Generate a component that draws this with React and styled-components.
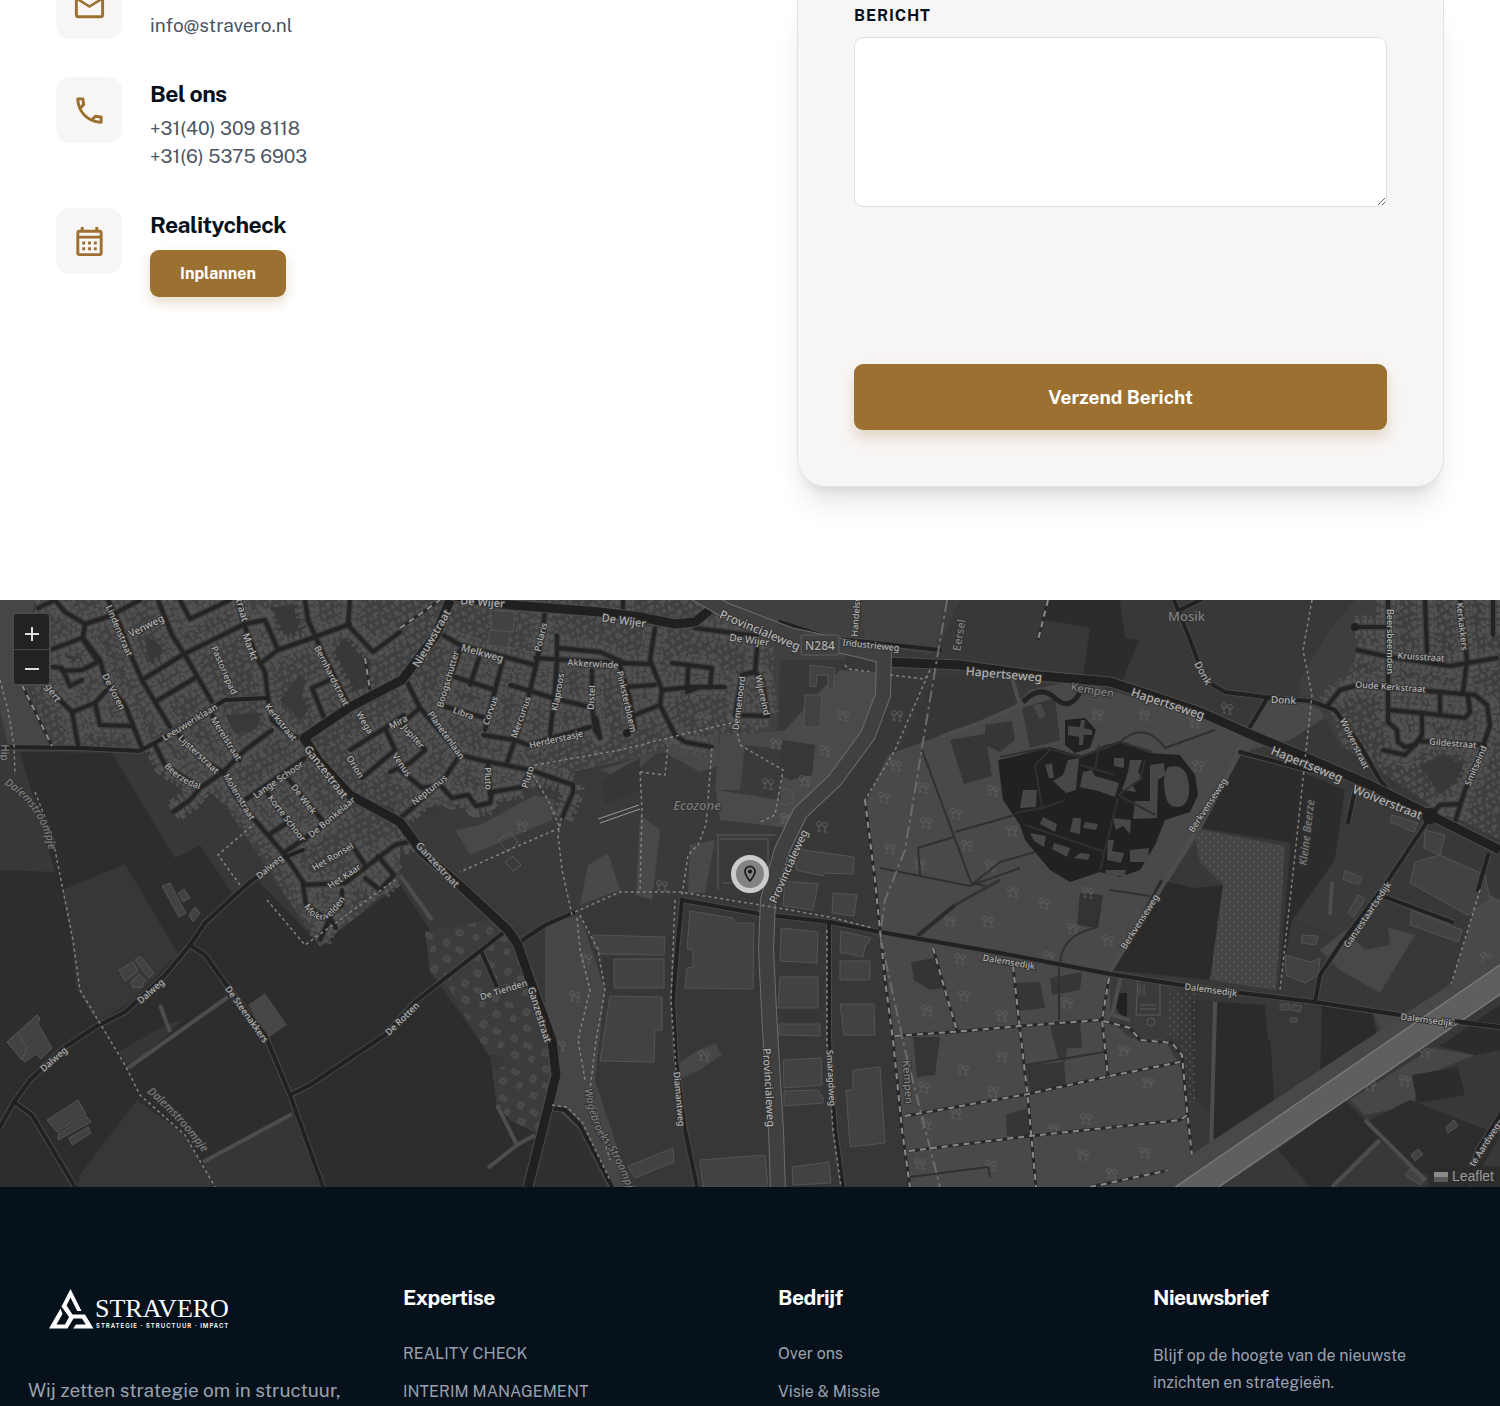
import React from 'react';
import styled, { createGlobalStyle } from 'styled-components';
import {
  MdOutlineCalendarMonth,
  MdOutlineCall,
  MdOutlineLocationOn,
  MdOutlineMail
} from 'react-icons/md';

const GlobalStyle = createGlobalStyle`
  *, *::before, *::after {
    box-sizing: border-box;
  }

  body {
    margin: 0;
    background: #ffffff;
    color: #07111b;
    font-family: 'Public Sans', Inter, 'Liberation Sans', sans-serif;
    font-size: 19px;
  }

  h3, p, ul {
    margin: 0;
    padding: 0;
  }
`;

/* ---------- contact ---------- */

const Contact = styled.section`
  display: grid;
  grid-template-columns: repeat(2, minmax(0, 1fr));
  gap: 94px;
  padding: 0 56px 113px;
`;

const ContactList = styled.div`
  display: flex;
  flex-direction: column;
  gap: 38px;
`;

const ContactItem = styled.div`
  display: flex;
  align-items: flex-start;
  gap: 28px;
`;

const IconTile = styled.div`
  display: flex;
  align-items: ${props => (props.$cut ? 'flex-end' : 'center')};
  justify-content: center;
  width: 66px;
  height: ${props => (props.$cut ? '39px' : '66px')};
  padding-bottom: ${props => (props.$cut ? '15px' : '0')};
  overflow: hidden;
  border-radius: ${props => (props.$cut ? '0 0 14px 14px' : '14px')};
  background: #f8f6f5;
  color: #9c7030;

  svg {
    flex: none;
    width: 35px;
    height: 35px;
  }
`;

const ContactBody = styled.div`
  display: flex;
  flex-direction: column;
  align-items: flex-start;
  align-self: ${props => (props.$bottom ? 'flex-end' : 'auto')};
`;

const ContactTitle = styled.h3`
  margin-bottom: 4px;
  font-size: 23px;
  font-weight: 700;
  line-height: 33px;
  letter-spacing: -0.025em;
`;

const ContactLink = styled.a`
  color: #4a5565;
  line-height: 28px;
  text-decoration: none;
`;

const PlanButton = styled.button`
  height: 47px;
  margin-top: 5px;
  padding: 0 30px;
  border: 0;
  border-radius: 9px;
  background: #9c7030;
  box-shadow: 0 6px 12px rgba(156, 112, 48, 0.24);
  color: #ffffff;
  font: inherit;
  font-size: 16px;
  font-weight: 700;
`;

const FormCard = styled.form`
  display: flex;
  flex-direction: column;
  padding: 4px 56px 56px;
  border: 1px solid #e6e2df;
  border-top: 0;
  border-radius: 0 0 28px 28px;
  background: #f8f6f5;
  box-shadow: 0 22px 28px -6px rgba(0, 0, 0, 0.1),
    0 9px 12px -7px rgba(0, 0, 0, 0.1);
`;

const FieldLabel = styled.label`
  margin-bottom: 9px;
  font-size: 16px;
  font-weight: 700;
  line-height: 24px;
  letter-spacing: 0.05em;
  text-transform: uppercase;
`;

const MessageBox = styled.textarea`
  width: 100%;
  height: 170px;
  padding: 14px 19px;
  border: 1px solid #e2dfdc;
  border-radius: 9px;
  background: #ffffff;
  font: inherit;
  resize: vertical;
`;

const SubmitButton = styled.button`
  height: 66px;
  margin-top: 157px;
  border: 0;
  border-radius: 9px;
  background: #9c7030;
  box-shadow: 0 8px 14px rgba(156, 112, 48, 0.24);
  color: #ffffff;
  font: inherit;
  font-weight: 700;
`;

/* ---------- map ---------- */

const MapFrame = styled.section`
  position: relative;
  height: 587px;
  overflow: hidden;
  background: #383838;
`;

const MapSvg = styled.svg`
  display: block;
  width: 100%;
  height: 100%;

  text {
    fill: #b0b0b0;
    stroke: #333333;
    stroke-width: 2px;
    paint-order: stroke;
    font-family: 'Noto Sans', sans-serif;
    font-weight: 500;
    text-anchor: middle;
  }

  .water {
    fill: #7a7a7a;
    font-style: italic;
  }

  .area {
    fill: #808080;
  }
`;

const ZoomControl = styled.div`
  position: absolute;
  top: 12px;
  left: 12px;
  display: flex;
  flex-direction: column;
  overflow: hidden;
  border: 2px solid #4a4a4a;
  border-radius: 4px;
`;

const ZoomButton = styled.button`
  display: flex;
  align-items: center;
  justify-content: center;
  width: 35px;
  height: 35px;
  padding: 4px 0 0;
  border: 0;
  background: #222222;
  color: #dddddd;

  & + & {
    border-top: 1px solid #484848;
  }
`;

const Marker = styled.div`
  position: absolute;
  top: 255px;
  left: 50%;
  display: flex;
  align-items: center;
  justify-content: center;
  width: 38px;
  height: 38px;
  margin-left: -19px;
  border: 5px solid #cbcbcb;
  border-radius: 50%;
  background: #828282;
  color: #171717;

  svg {
    width: 20px;
    height: 20px;
  }
`;

const Attribution = styled.a`
  position: absolute;
  right: 0;
  bottom: 0;
  display: flex;
  align-items: center;
  gap: 4px;
  padding: 0 6px;
  background: rgba(42, 42, 42, 0.8);
  color: #9a9a9a;
  font-family: 'Liberation Sans', Arial, sans-serif;
  font-size: 14px;
  line-height: 21px;
  text-decoration: none;
`;

const TOWN_WEST =
  '38,0 450,0 404,78 304,138 400,222 400,280 320,347 265,265 225,205 155,148 50,148 20,60';
const TOWN_NORTH =
  '400,0 690,0 720,15 775,48 768,130 700,142 560,175 520,200 400,210 350,195 304,138 404,78';
const TOWN_EAST =
  '1330,110 1345,80 1385,0 1500,0 1500,240 1430,205 1340,145';
const DE_TIENDEN =
  '425,332 500,318 520,345 552,440 560,480 540,535 510,520 497,505 492,470 507,465 500,455 488,455 450,390 430,372';

const AREAS = [
  // farmland
  ['#2d2d2d', '20,152 112,153 175,258 200,245 232,290 240,262 320,345 400,285 430,330 430,372 490,455 497,505 545,530 528,587 0,587 0,270 55,272'],
  ['#383838', '115,155 155,150 165,165 200,185 240,180 285,255 240,290 232,293 200,245 175,258'],
  ['#373737', '62,290 125,264 178,354 130,402 98,423 77,390 70,330'],
  ['#373737', '137,500 185,535 205,570 220,587 78,587 80,575'],
  ['#363636', '203,562 292,512 303,540 318,587 265,587 270,575 288,565 270,587 212,587'],
  ['#474747', '265,393 287,425 268,438 248,405'],
  ['#363636', '118,452 165,425 185,418 130,468'],
  ['#303030', '553,508 570,512 582,530 610,587 528,587 545,525'],
  // town
  ['#404040', TOWN_WEST],
  ['#404040', '400,0 960,0 850,45 845,60 780,60 778,130 720,140 560,175 520,200 400,210 350,195 304,138 404,78'],
  ['#3c3c3c', DE_TIENDEN],
  ['url(#houses)', TOWN_WEST],
  ['url(#houses)', TOWN_NORTH],
  ['url(#farms)', DE_TIENDEN],
  ['#464646', '0,0 36,0 18,60 50,145 8,146 0,110'],
  ['#383838', '270,8 312,2 312,40 280,52'],
  ['#383838', '345,35 372,55 368,85 345,95 330,60'],
  ['#393939', '66,55 98,60 82,72 65,70'],
  ['#383838', '145,35 160,45 165,60 150,68'],
  ['#393939', '225,115 265,112 255,130 235,133'],
  ['#393939', '300,75 320,95 300,120 280,100'],
  // park and woodland west
  ['#3a3a3a', '400,225 540,180 720,145 790,145 760,295 620,295 530,335'],
  ['#484848', '480,225 535,195 555,200 552,220 470,255 455,230'],
  ['#484848', '600,170 718,132 720,165 700,172 660,150 625,180'],
  ['#484848', '720,135 792,130 790,150 745,145 740,190 715,190'],
  ['#494949', '640,215 660,230 652,300 636,295'],
  ['#494949', '690,245 715,240 705,293 688,293'],
  ['#494949', '588,265 608,253 620,290 580,305'],
  ['#4a4a4a', '840,70 878,72 866,140 832,175 790,228 720,220 716,190 780,200 785,130'],
  ['#373737', '782,140 815,145 812,175 790,180 780,175'],
  ['#363636', '600,180 640,158 640,190 605,205'],
  ['#464646', '545,325 580,315 605,390 595,480 630,587 608,587 580,530 552,505 560,450 545,405'],
  // business park
  ['#373737', '640,300 760,314 864,305 884,400 910,587 640,587 595,480 612,390 580,315'],
  ['#464646', '676,465 695,452 715,443 722,455 700,470 678,480'],
  ['#3e3e3e', '855,0 960,0 935,55 860,45'],
  ['#424242', '860,0 945,0 935,45 865,40'],
  // big forest
  ['#494949', '866,203 888,155 950,130 1010,110 1030,90 1075,80 1150,102 1250,130 1268,100 1345,105 1290,140 1250,150 1195,240 1110,372 1165,440 1182,470 1192,565 1175,587 910,587 886,370'],
  ['#363636', '935,75 1010,75 1016,107 940,136 900,150'],
  ['#363636', '950,140 985,134 992,176 964,184'],
  ['#363636', '985,125 1012,121 1015,140 1000,152 985,145'],
  ['#373737', '1022,108 1055,98 1060,140 1030,148'],
  ['#333333', '1080,293 1103,295 1098,328 1077,325'],
  ['#343434', '911,362 935,358 943,388 930,390 914,380'],
  ['#363636', '1016,383 1040,382 1045,408 1018,411'],
  ['#363636', '1050,378 1082,372 1080,390 1052,395'],
  ['#363636', '1050,425 1080,422 1082,448 1067,448 1065,462 1058,458'],
  ['#353535', '913,437 940,437 935,475 917,477'],
  ['#353535', '1026,465 1064,462 1066,487 1030,492'],
  ['#363636', '1006,515 1028,508 1030,536 1007,536'],
  ['#3b3b3b', '1110,372 1180,385 1178,440 1130,438 1110,420'],
  // east
  ['#2c2c2c', '1050,0 1120,0 1125,38 1139,40 1122,82 1083,75 1090,28 1045,20'],
  ['#3e3e3e', '1300,80 1330,30 1355,0 1500,0 1500,240 1430,205 1340,145 1320,110 1300,100'],
  ['url(#houses)', TOWN_EAST],
  ['#383838', '1420,165 1445,155 1470,170 1440,195'],
  ['#2b2b2b', '1241,155 1297,170 1292,243 1202,228'],
  ['#2b2b2b', '1160,280 1195,288 1223,285 1210,380 1112,370'],
  ['#454545', '1193,228 1285,246 1276,390 1210,380 1223,285 1200,262'],
  ['#2c2c2c', '1297,170 1345,190 1335,260 1292,320 1278,395 1290,250'],
  ['#3a3a3a', '1345,190 1430,220 1345,340 1295,320 1335,260'],
  ['#333333', '1205,400 1215,402 1212,515 1195,500 1190,400'],
  ['#2b2b2b', '1218,402 1265,405 1268,440 1282,442 1275,510 1210,553'],
  ['#2b2b2b', '1322,405 1372,413 1378,440 1320,480'],
  ['#373737', '1268,405 1322,405 1318,482 1275,512'],
  ['#454545', '1372,412 1430,420 1385,440'],
  ['#494949', '1450,390 1480,290 1500,300 1500,360 1445,398'],
  ['#2d2d2d', '1278,550 1345,500 1380,535 1330,587 1310,587'],
  ['#474747', '1350,500 1432,448 1475,455 1425,475 1412,505 1365,515'],
  ['#2c2c2c', '1412,475 1458,467 1465,495 1417,503'],
  ['#2c2c2c', '1440,446 1500,405 1500,450 1475,455'],
  ['#2d2d2d', '1360,525 1410,500 1500,535 1480,570 1425,575'],
  ['#484848', '1320,350 1345,330 1365,350 1390,345 1388,328 1415,335 1380,393 1340,370']
];

const BUILDINGS = [
  '593,335 665,337 664,355 599,354 599,347 594,347',
  '614,359 664,359 664,388 614,388',
  '610,396 662,397 662,430 655,430 654,462 600,461',
  '690,311 733,318 735,323 754,323 753,389 685,388 687,368 693,367 693,350 687,349',
  '781,328 818,332 817,363 780,361',
  '780,377 818,377 818,408 778,408',
  '779,424 820,424 820,436 779,435',
  '783,460 821,458 822,485 784,488',
  '784,491 818,490 823,498 823,503 784,506',
  '841,331 871,338 865,347 863,357 845,353 840,353',
  '840,361 870,361 870,380 840,380',
  '840,404 874,404 875,435 844,435',
  '853,470 880,467 885,543 850,547 846,490 853,490',
  '792,567 829,562 831,583 793,585',
  '785,281 818,284 813,310 783,306',
  '833,293 857,295 854,316 832,313',
  '796,249 854,257 853,274 825,273 823,276 796,270',
  '700,560 765,555 768,587 703,587',
  '628,566 673,548 674,562 635,578',
  '490,10 515,12 513,32 492,30',
  '490,30 510,32 508,48 488,45',
  '119,370 133,362 138,371 125,381',
  '135,360 140,356 154,373 149,378',
  '131,382 139,374 145,380 142,387 133,388',
  '162,286 170,283 186,313 179,317',
  '178,293 184,289 190,298 183,302',
  '189,315 195,307 200,313 193,322',
  '7,442 37,415 40,418 38,424 52,448 41,459 36,454 25,462',
  '17,433 27,447 22,460 7,442',
  '47,520 78,500 86,514 57,532',
  '58,534 86,516 91,522 58,540',
  '69,538 88,527 91,533 72,545',
  '810,65 835,68 833,90 828,88 828,75 817,75 816,87 810,86',
  '805,95 822,95 820,127 804,127',
  '1415,262 1440,255 1485,275 1490,300 1468,315 1410,283',
  '1412,310 1462,330 1458,342 1410,325',
  '1285,355 1310,362 1320,358 1318,375 1305,383 1286,375',
  '1302,335 1318,336 1316,345 1301,343',
  '1425,230 1445,235 1440,255 1424,248',
  '1358,295 1365,299 1354,317 1348,313',
  '1345,270 1362,278 1358,285 1343,279',
  '1392,215 1418,223 1414,232 1390,222',
  '1280,404 1290,404 1290,410 1280,410',
  '1293,404 1302,406 1300,412 1292,410',
  '1290,418 1297,418 1297,422 1290,422',
  '1446,527 1454,520 1458,526 1448,533',
  '1411,555 1418,549 1423,554 1415,561',
  '1405,575 1410,569 1425,580 1420,585'
];

// lighter blocks inside the dark estate
const BLOCKS = [
  '1068,160 1079,158 1076,190 1066,193 1053,181 1063,175',
  '1083,172 1092,170 1095,176 1119,183 1115,197 1098,191 1080,187',
  '1045,165 1052,163 1054,178 1049,178',
  '1114,158 1124,158 1124,168 1114,166',
  '1130,160 1142,160 1138,172 1143,178 1132,184 1136,192 1122,190 1128,172',
  '1150,165 1164,163 1165,175 1158,180 1157,218 1133,219 1135,201 1150,201',
  '1023,190 1037,190 1036,207 1020,208',
  '1043,217 1057,224 1055,232 1040,224',
  '1073,218 1081,218 1080,234 1070,232',
  '1085,222 1098,224 1096,230 1083,228',
  '1030,233 1046,236 1044,247 1034,241',
  '1054,243 1070,248 1067,257 1052,249',
  '1113,218 1131,220 1130,234 1123,226 1116,230',
  '1108,240 1114,240 1112,251 1124,253 1121,263 1107,260',
  '1130,250 1149,248 1148,262 1130,262',
  '1106,270 1126,270 1125,276 1105,276',
  '1068,126 1080,127 1081,120 1085,120 1084,128 1092,130 1092,135 1084,135 1083,145 1079,145 1079,137 1068,135',
  '1033,105 1041,104 1046,116 1039,119',
  '1080,253 1090,254 1088,260 1074,258'
];

const MAJOR_ROADS = [
  'M450 0L436 35L402 80L350 107L304 138L318 160L350 195L400 222L422 252L465 290L508 330L518 345L530 380L552 440L556 475L545 520L528 587',
  'M455 -4L500 4L600 12L640 17L675 24L695 22L710 10',
  'M886 62L960 65L1040 76L1110 82L1150 95L1200 112L1245 132L1300 155L1370 185L1430 215L1500 250'
];

const PROVINCIAL = 'M690 -10L725 10L790 35L860 50L888 57';
const PROVINCIAL_SOUTH = 'M884 52L883 95L868 135L835 180L800 213L782 250L768 300L766 350L770 430L776 530L778 590';

const TOWN_ROADS = [
  'M38 8L55 0L65 12L85 24L110 16L140 0',
  'M85 24L83 38L100 60L106 82L125 105L142 148',
  'M158 0L172 35L185 55L212 102',
  'M108 0L120 25L133 60L142 80L155 102L170 127',
  'M142 80L182 55L245 24L265 20L278 50',
  'M155 102L195 78',
  'M180 0L190 19L230 0',
  'M262 62L278 50L312 38L350 24',
  'M238 0L243 22L258 60L265 72L268 98L272 120L290 135L304 139',
  'M305 0L308 20L325 58L350 107',
  'M350 0L348 25L373 52L400 32',
  'M50 50L82 38L98 62L82 70L62 71',
  'M52 67L62 68L70 86L82 80',
  'M50 90L72 112L78 145',
  'M72 112L95 103L107 90',
  'M95 103L100 125L132 126',
  'M325 120L312 88L330 80',
  'M212 115L225 140L240 160',
  'M175 130L200 158L223 172',
  'M155 145L165 165L200 188L223 172L245 150L272 130',
  'M223 172L235 195L255 220L285 255L305 285',
  'M200 188L190 200L173 212',
  'M245 200L305 158',
  'M265 190L290 225L305 240',
  'M285 175L322 220',
  'M285 252L320 228L350 205',
  'M270 234L288 222',
  'M303 285L345 283L395 245L415 240',
  'M303 285L306 305L325 318L342 305L342 290',
  'M352 245L365 265M378 256L394 275L380 290L365 278',
  'M330 318L320 340M330 318L336 328',
  'M350 150L385 128L404 115M385 128L395 150L362 178',
  'M438 32L460 45L505 57L535 65',
  'M545 12L542 35L535 70L525 110L515 140L507 163',
  'M460 50L450 80L440 105',
  'M480 55L470 85M503 60L495 90L485 130',
  'M455 77L495 90M510 85L560 100L590 107M440 105L485 118',
  'M407 82L420 108L460 155L480 160L530 170L573 185L573 192L562 218',
  'M400 125L420 108M400 120L425 150L410 163L390 172',
  'M483 135L515 140L528 145L590 127',
  'M557 35L557 60L555 90L550 135',
  'M535 58L620 63L650 64M558 48L600 52L625 63',
  'M655 28L650 60L662 90L660 105L675 135L685 142L712 147',
  'M592 70L592 105L595 130L600 138L596 118',
  'M620 65L630 100L635 130',
  'M625 87L655 85M662 90L690 87L725 87M635 115L660 105',
  'M672 63L712 68L710 88M688 68L687 92L700 87',
  'M695 28L757 36L757 50L755 72L742 75L735 115L768 116',
  'M755 72L762 80L768 116M623 0L623 14',
  'M460 155L443 180L410 210L395 222',
  'M400 170L422 188L440 185L452 198L468 195L476 206L490 203L492 192L522 187L530 170M488 165L490 195',
  'M1328 105L1340 90L1358 85L1440 92L1475 95L1487 105L1490 125L1480 155L1465 190L1455 222',
  'M1388 0L1388 122L1397 130L1398 142L1405 147L1415 145L1422 135L1422 113',
  'M1388 110L1422 113L1465 118L1470 112L1468 97M1440 92L1440 112',
  'M1357 50L1390 57L1450 66L1497 58',
  'M1460 0L1467 60L1463 92M1355 27L1388 27M1425 0L1427 52',
  'M1383 150L1405 155L1418 141L1485 145',
  'M1430 215L1440 205L1458 204M1493 0L1493 35'
];

const ROADS = [
  'M0 147L80 148L140 151L160 140L225 100L268 98',
  'M303 250L285 257L250 282L232 298L205 323L190 345L165 375L125 412L97 426L65 447L30 480L14 502L0 527',
  'M14 502L32 515L75 587',
  'M190 345L205 355L228 387L265 435L290 495L323 587',
  'M290 495L310 485L385 435L415 402L503 333M482 353L496 385',
  'M520 342L545 325L575 312',
  'M552 508L565 510L580 525L612 587',
  'M682 300L678 340L673 400L676 460L685 530L697 587',
  'M682 300L760 314L830 322L880 332L1000 353L1110 374L1200 388L1315 402L1400 415L1500 427',
  'M829 323L829 440L835 530L843 587',
  'M1174 0L1190 40L1205 80L1225 92L1265 97L1310 101L1335 110L1360 145L1380 180L1395 198M1180 10L1200 0',
  'M1268 97L1248 130',
  'M1427 222L1385 285L1340 345L1320 375L1315 402M1385 297L1452 322',
  'M1240 152L1300 168L1330 175M1355 190L1348 222M1488 255L1478 290',
  'M780 22L830 38L940 50M1500 515L1478 550L1465 587'
];

const THIN_LINES = [
  'M922 150L972 285L1020 268M955 232L1015 215M973 283L985 286',
  'M880 268L970 286L1000 262L1035 252M920 275L918 248L954 237',
  'M1000 157L1045 148L1080 157L1120 142L1152 152',
  'M1050 150L1035 165L1042 208L1015 213M1065 200L1042 208M1080 165L1115 175M1118 198L1100 270M1025 225L1105 252M1118 195L1155 215',
  'M1118 195L1140 180L1145 160M1099 145L1095 170',
  'M1059 365L1059 420M1110 290L1150 296M1060 363Q1062 335 1095 328L1100 310',
  'M1026 465L1104 452M910 577L988 567L990 577',
  'M1100 150L1120 142Q1145 120 1165 148L1215 130'
];

const FOOTPATHS = [
  'M575 312L620 292L680 292L760 305L830 317L872 328',
  'M572 315L562 270L558 235L562 215',
  'M712 148L706 225L698 245L688 255L682 295',
  'M530 170L548 200L560 228L520 245L460 272',
  'M535 165L620 150L680 135L735 122L740 145',
  'M640 172L642 210L640 290M640 172L665 175L668 145M740 145L783 170L775 215L760 222',
  'M580 315L598 350L605 390L596 440L590 490L610 560',
  'M577 318L580 350L590 390L578 440L585 480',
  'M675 300L671 400L676 470M827 330L827 440L833 530L841 587',
  'M552 505L567 507L582 522L610 580',
  'M0 80L8 110L14 145L15 175M35 192L52 235L65 300L73 340L80 390L125 465L140 495L185 535L215 587',
  'M240 285L218 255L254 224M267 300L305 345L395 280',
  'M845 65L848 69L873 72M890 75L925 79L928 74',
  'M930 70L895 150L865 200L875 280',
  'M1312 0L1303 50L1312 95L1305 160L1295 255L1280 390',
  'M1193 555L1270 510L1390 430L1430 400M1480 290L1450 388L1430 405'
];

const TRACKS = [
  'M865 200L875 280L885 380L893 440L902 530L910 587',
  'M895 436L965 431L1020 426L1100 420L1130 428L1140 440L1172 443L1182 455L1187 510L1193 565',
  'M933 348L945 390L957 431M1013 366L1020 430L1028 500L1036 587',
  'M1109 378L1102 420L1108 477M905 516L1028 494L1110 476L1180 462',
  'M909 551L1030 536L1180 520L1187 515M1090 587L1193 565',
  'M1048 0L1038 40',
  'M22 85L52 146M365 58L370 90M400 28L440 0'
];

const BOUNDARIES = [
  'M947 0L930 100L905 250L885 300L880 335L905 450L940 587',
  'M1500 520L1480 552'
];

const LIGHT_TRACKS = [
  'M128 468L228 397',
  'M203 562L292 514',
  'M1248 130L1225 180L1190 240L1165 282L1110 372',
  'M940 137L975 125L1020 105L1012 78',
  'M160 405L170 432',
  'M497 505L517 545L488 568M517 545L535 535',
  'M1215 402L1211 555M1332 282L1330 315',
  'M400 275L432 320M1365 520L1425 580M1380 540L1332 587',
  'M1122 372L1112 415L1130 420'
];

// [text, x1, y1, x2, y2, size, kind]
const LABELS = [
  ['Lindenstraat', 109, 6, 130, 55, 9],
  ['Venweg', 131, 33, 161, 18, 10],
  ['Pastoriepad', 214, 46, 235, 94, 9],
  ['Markt', 246, 34, 255, 59, 10],
  ['straat', 238, -6, 246, 21, 10],
  ['De Voren', 105, 74, 123, 109, 9],
  ['Bernhardstraat', 317, 46, 347, 105, 9],
  ['Leeuweriklaan', 163, 138, 216, 106, 9],
  ['Merelstraat', 213, 117, 240, 160, 9],
  ['Lijsterstraat', 180, 136, 218, 172, 9],
  ['Kerkstraat', 268, 106, 294, 138, 9],
  ['Ganzestraat', 309, 149, 344, 194, 11],
  ['Molenstraat', 226, 174, 253, 219, 9],
  ['Lange Schoor', 254, 196, 302, 163, 9],
  ['Korte Schoor', 270, 196, 304, 240, 9],
  ['De Wiek', 293, 185, 315, 213, 9],
  ['De Bonkelaar', 310, 235, 353, 199, 9],
  ['Het Ronsel', 313, 268, 352, 245, 9],
  ['Het Kaar', 329, 286, 359, 266, 9],
  ['Wega', 359, 112, 371, 133, 9],
  ['Orion', 349, 156, 362, 177, 9],
  ['Mira', 389, 127, 407, 117, 9],
  ['Jupiter', 403, 124, 424, 148, 9],
  ['Venus', 394, 153, 410, 176, 9],
  ['Nieuwstraat', 416, 64, 446, 12, 11],
  ['Melkweg', 463, 47, 502, 58, 10],
  ['Polaris', 537, 51, 544, 23, 9],
  ['Boogschutter', 439, 108, 456, 50, 9],
  ['Libra', 453, 109, 474, 117, 9],
  ['Planetenlaan', 430, 112, 463, 158, 9],
  ['Corvus', 485, 125, 495, 96, 9],
  ['Mercurius', 513, 138, 528, 96, 9],
  ['Klaproos', 554, 111, 561, 73, 9],
  ['Distel', 590, 110, 592, 85, 9],
  ['Akkerwinde', 567, 62, 619, 65, 9],
  ['Pinksterbloem', 620, 71, 634, 132, 9],
  ['Herderstasje', 529, 145, 583, 133, 9],
  ['Pluto', 488, 167, 489, 190, 9],
  ['Pluto', 524, 188, 531, 166, 9],
  ['Neptunus', 412, 203, 446, 176, 9],
  ['De Wijer', 462, 0, 503, 3, 11],
  ['De Wijer', 603, 17, 645, 23, 11],
  ['De Wijer', 731, 37, 768, 42, 10],
  ['Provincialeweg', 722, 14, 798, 46, 12],
  ['Dennenoord', 735, 130, 742, 76, 9],
  ['Wijereind', 759, 76, 767, 114, 9],
  ['Industrieweg', 842, 42, 900, 48, 9],
  ['Handelsweg', 854, 36, 858, -16, 9],
  ['Eersel', 956, 50, 961, 20, 11, 'area'],
  ['Kempen', 1070, 86, 1115, 93, 11, 'area'],
  ['Kempen', 907, 460, 910, 504, 11, 'area'],
  ['Mosik', 1169, 16, 1204, 16, 13, 'area'],
  ['Hapertseweg', 968, 71, 1040, 77, 12],
  ['Hapertseweg', 1133, 92, 1203, 115, 12],
  ['Hapertseweg', 1273, 150, 1341, 178, 12],
  ['Wolverstraat', 1355, 189, 1420, 215, 12],
  ['Wolverstraat', 1343, 119, 1367, 168, 9],
  ['Donk', 1198, 63, 1209, 83, 10],
  ['Donk', 1272, 99, 1295, 100, 10],
  ['Beersbeemden', 1390, 9, 1390, 74, 9],
  ['Kerkakkers', 1460, 3, 1465, 50, 9],
  ['Kruisstraat', 1397, 55, 1445, 58, 9],
  ['Oude Kerkstraat', 1355, 84, 1426, 89, 9],
  ['Gildestraat', 1430, 141, 1476, 145, 9],
  ['Smitseind', 1467, 185, 1484, 146, 9],
  ['Kleine Beerze', 1302, 266, 1310, 199, 11, 'water'],
  ['Berkvenseweg', 1190, 232, 1225, 178, 9],
  ['Berkvenseweg', 1122, 349, 1157, 294, 9],
  ['Ganzestaartsedijk', 1345, 347, 1389, 282, 9],
  ['Dalemsedijk', 982, 357, 1036, 366, 9],
  ['Dalemsedijk', 1184, 386, 1238, 393, 9],
  ['Dalemsedijk', 1400, 416, 1454, 423, 9],
  ['te Aardweg', 1470, 567, 1499, 522, 9],
  ['Provincialeweg', 771, 304, 805, 228, 11],
  ['Provincialeweg', 767, 446, 772, 529, 11],
  ['Diamantweg', 677, 471, 682, 527, 9],
  ['Smaragdweg', 830, 449, 833, 507, 9],
  ['Ganzestraat', 417, 242, 459, 287, 10],
  ['Ganzestraat', 531, 386, 549, 443, 10],
  ['De Tienden', 480, 397, 527, 382, 9],
  ['De Rotten', 386, 434, 418, 403, 9],
  ['De Steenakkers', 227, 386, 267, 442, 9],
  ['Dalweg', 257, 277, 282, 256, 9],
  ['Dalweg', 138, 402, 163, 380, 9],
  ['Dalweg', 41, 470, 66, 448, 9],
  ['Ecozone', 672, 205, 722, 205, 13, 'water'],
  ['gert', 48, 84, 59, 101, 10],
  ['Hip', 5, 144, 5, 161, 10, 'area']
];

const CURVED_LABELS = [
  ['dalem-1', 'Dalemstroompje', 'M-3 180Q44 205 50 258', 11, 'water'],
  ['dalem-2', 'Dalemstroompje', 'M138 485Q182 520 209 562', 11, 'water'],
  ['wagebroek', 'Wagebroeks-Stroompje', 'M583 478Q588 525 606 545Q622 570 632 605', 11, 'water'],
  ['beerzedal', 'Beerzedal', 'M160 161Q176 184 206 191', 9, ''],
  ['molenvelden', 'Molenvelden', 'M299 298Q322 345 350 290', 9, '']
];

const TREES = [
  [843, 115], [825, 150], [805, 180], [785, 218], [822, 226], [897, 115], [896, 165],
  [884, 197], [923, 187], [956, 213], [926, 222], [890, 248], [920, 263], [967, 245],
  [991, 265], [1012, 230], [993, 190], [1097, 114], [1144, 114], [1195, 122], [1227, 108],
  [1198, 165], [1013, 291], [1044, 303], [1088, 292], [988, 321], [950, 320], [1073, 328],
  [1108, 340], [1049, 356], [960, 358], [927, 410], [964, 395], [1002, 415], [1067, 402],
  [1002, 456], [963, 469], [924, 487], [993, 491], [956, 513], [926, 523], [1054, 528],
  [1086, 518], [1124, 450], [1148, 482], [1145, 552], [1083, 554], [1112, 573], [920, 563],
  [991, 565], [703, 117], [776, 143], [768, 183], [787, 218], [586, 358], [575, 396], [560, 445],
  [704, 455], [522, 225], [662, 285], [1405, 480], [1486, 357], [1425, 452], [1370, 485]
];

const labelAngle = ([, x1, y1, x2, y2]) =>
  (Math.atan2(y2 - y1, x2 - x1) * 180) / Math.PI;

const Lines = ({ paths, ...rest }) => (
  <g fill="none" strokeLinejoin="round" {...rest}>
    {paths.map(d => (
      <path key={d} d={d} />
    ))}
  </g>
);

const StreetMap = () => (
  <MapSvg
    viewBox="0 0 1500 587"
    preserveAspectRatio="xMidYMid slice"
    role="img"
    aria-label="Kaart"
  >
    <defs>
      <pattern id="orchard" width="8" height="8" patternUnits="userSpaceOnUse">
        <circle cx="2" cy="2" r="0.8" fill="#6a6a6a" />
        <circle cx="6" cy="6" r="0.8" fill="#6a6a6a" />
      </pattern>
      <pattern
        id="houses"
        width="37"
        height="31"
        patternUnits="userSpaceOnUse"
        patternTransform="rotate(-28)"
      >
        <path
          fill="#505050"
          d="M1 1h4v3h2v3h-5zM9 2h3v4h-3zM14 0h5v4h-2v2h-3zM21 3h3v3h-3zM26 1h6v3h-3v3h-3zM34 4h3v3h-3zM2 10h3v3h-3zM8 9h5v3h2v3h-6zM18 9h3v5h-3zM24 10h4v3h-4zM31 9h3v4h2v2h-5zM0 17h5v4h-2v2h-3zM8 18h3v3h-3zM13 17h4v5h-4zM20 18h6v3h-3v2h-3zM29 18h3v3h-3zM34 19h2v4h-2zM3 25h4v4h-4zM10 25h3v3h-3zM15 26h6v3h-6zM24 25h3v4h-3zM30 26h4v3h-4z"
        />
      </pattern>
      <pattern
        id="farms"
        width="34"
        height="29"
        patternUnits="userSpaceOnUse"
        patternTransform="rotate(25)"
      >
        <path
          fill="#464646"
          stroke="#545454"
          d="M3 3h5v6h-5zM17 5h7v4h-7zM28 15h4v5h-4zM10 18h6v5h-6z"
        />
      </pattern>
      <g id="trees" fill="none" stroke="#5c5c5c">
        <circle cx="-3" cy="-2" r="2.5" />
        <circle cx="3" cy="-1" r="2.5" />
        <path d="M-3 -2V5M-5 5H-1M3 -1V6M1 6H5" />
      </g>
    </defs>

    {AREAS.map(([fill, points]) => (
      <polygon key={fill + points} points={points} fill={fill} />
    ))}
    <polygon
      points="1193,228 1285,246 1276,390 1210,380 1223,285 1200,262"
      fill="url(#orchard)"
    />
    <polygon points="1170,390 1195,392 1195,505 1190,505 1178,440 1168,435" fill="url(#orchard)" />

    {/* rows of houses on both sides of the streets */}
    <Lines paths={TOWN_ROADS} stroke="#515151" strokeWidth="23" strokeDasharray="3 4 5 3 2 4" />
    <Lines paths={TOWN_ROADS} stroke="#444444" strokeWidth="18" strokeDasharray="2 3 5 4" />
    <Lines paths={TOWN_ROADS} stroke="#525252" strokeWidth="15" strokeDasharray="5 3 3 2" />
    <Lines paths={TOWN_ROADS} stroke="#3f3f3f" strokeWidth="7" />

    {TREES.map(([x, y]) => (
      <use key={`${x}-${y}`} href="#trees" x={x} y={y} />
    ))}

    {BUILDINGS.map(points => (
      <polygon key={points} points={points} fill="#424242" stroke="#545454" />
    ))}

    <g fill="#212121">
      <path d="M998 160L1020 155L1050 147L1070 153L1085 156L1105 145L1120 142L1150 153L1180 155L1195 175L1198 195L1190 212L1165 220L1155 245L1140 270L1120 277L1100 272L1070 282L1050 270L1025 240L1020 225L1003 200Z" />
      <path d="M1065 120L1085 118L1096 130L1090 148L1075 153L1065 145Z" />
      <path d="M1115 393h12v25l-7 -4l-6 -10z" />
    </g>
    {BLOCKS.map(points => (
      <polygon key={points} points={points} fill="#474747" />
    ))}
    <path d="M1168 167q17 -4 20 13q4 20 -6 26q-12 4 -16 -8q-5 -22 2 -31z" fill="#484848" />

    <g fill="none" stroke="#5a5a5a">
      <circle cx="1151" cy="422" r="4" />
      <path d="M1138 380h22v35h-24zM1140 385v10M1144 385v10M1140 405h16M1140 409h16" />
      <circle cx="786" cy="197" r="8" />
      <path d="M716 235h60M718 235v55M720 239h48v44h-46" />
      <path d="M498 240l12 -8l8 10l-10 10zM505 262l8 -6l8 9l-8 6z" />
    </g>

    <Lines paths={LIGHT_TRACKS} stroke="#4d4d4d" strokeWidth="4" />
    <Lines paths={THIN_LINES} stroke="#303030" strokeWidth="2" />
    <path
      d="M1023 102Q1040 84 1055 98T1080 92"
      fill="none"
      stroke="#222222"
      strokeWidth="5"
    />
    <path d="M915 338L955 305" stroke="#2a2a2a" strokeWidth="4" />
    <path d="M955 305L1000 280" stroke="#333333" strokeWidth="3" />

    <Lines paths={ROADS} stroke="#484848" strokeWidth="6" />
    <Lines paths={TOWN_ROADS} stroke="#242424" strokeWidth="4" strokeLinecap="round" />
    <Lines paths={ROADS} stroke="#212121" strokeWidth="4" strokeLinecap="round" />
    <Lines paths={MAJOR_ROADS} stroke="#4c4c4c" strokeWidth="11" />
    <Lines paths={MAJOR_ROADS} stroke="#202020" strokeWidth="9" />
    <Lines paths={[PROVINCIAL, PROVINCIAL_SOUTH]} stroke="#6d6d6d" strokeWidth="16" />
    <Lines paths={[PROVINCIAL, PROVINCIAL_SOUTH]} stroke="#404040" strokeWidth="14" />
    <circle cx="1430" cy="216" r="8" fill="#202020" />
    <circle cx="1355" cy="27" r="4" fill="#202020" />
    <circle cx="627" cy="133" r="4" fill="#202020" />

    <Lines paths={FOOTPATHS} stroke="#828282" strokeWidth="1.5" strokeDasharray="3 3" />
    <Lines paths={TRACKS} stroke="#282828" strokeWidth="3" />
    <Lines paths={TRACKS} stroke="#8a8a8a" strokeWidth="2" strokeDasharray="6 5" />
    <Lines paths={BOUNDARIES} stroke="#6c6c6c" strokeWidth="2" strokeDasharray="12 4 3 4" />
    <path d="M598 219L639 205M600 223L640 209" stroke="#9a9a9a" />

    {/* motorway in the south-east corner */}
    <path d="M1155 600L1520 360" stroke="#484848" strokeWidth="36" />
    <path d="M1178 600L1520 366" stroke="#777777" strokeWidth="26" />
    <path d="M1178 600L1520 366" stroke="#5f5f5f" strokeWidth="23" />
    <path d="M1455 421L1500 427" stroke="#212121" strokeWidth="4" />

    <rect x="801" y="35" width="38" height="20" rx="2" fill="#404040" stroke="#5c5c5c" />
    <text x="820" y="50" fontSize="12">N284</text>

    {LABELS.map(label => {
      const [text, x1, y1, x2, y2, size, kind] = label;
      return (
        <text
          key={`${text}-${x1}-${y1}`}
          className={kind}
          fontSize={size}
          dominantBaseline="central"
          transform={`translate(${(x1 + x2) / 2} ${(y1 + y2) / 2}) rotate(${labelAngle(label)})`}
        >
          {text}
        </text>
      );
    })}

    {CURVED_LABELS.map(([id, text, d, size, kind]) => (
      <React.Fragment key={id}>
        <path id={id} d={d} fill="none" />
        <text className={kind} fontSize={size}>
          <textPath href={`#${id}`} startOffset="50%">
            {text}
          </textPath>
        </text>
      </React.Fragment>
    ))}
  </MapSvg>
);

/* ---------- footer ---------- */

const Footer = styled.footer`
  display: grid;
  grid-template-columns: repeat(4, minmax(0, 1fr));
  gap: 56px;
  padding: 94px 28px 0;
  background: #07111b;
  color: #99a1af;
`;

const FooterTitle = styled.h3`
  margin-bottom: 28px;
  color: #ffffff;
  font-size: 21px;
  font-weight: 700;
  line-height: 33px;
  letter-spacing: -0.025em;
`;

const FooterLinks = styled.ul`
  display: flex;
  flex-direction: column;
  gap: 14px;
  font-size: 16px;
  line-height: 24px;
  list-style: none;

  a {
    color: inherit;
    text-decoration: none;
  }
`;

const NewsletterText = styled.p`
  font-size: 16px;
  line-height: 27px;
`;

const Logo = styled.svg`
  display: block;
  width: 182px;
  height: 40px;
  margin: 8px 0 46px 20px;
`;

const Tagline = styled.p`
  line-height: 31px;
`;

const FOOTER_COLUMNS = [
  { title: 'Expertise', links: ['REALITY CHECK', 'INTERIM MANAGEMENT'] },
  { title: 'Bedrijf', links: ['Over ons', 'Visie & Missie'] }
];

export default function App() {
  return (
    <>
      <GlobalStyle />
      <Contact>
        <ContactList>
          <ContactItem>
            <IconTile $cut>
              <MdOutlineMail />
            </IconTile>
            <ContactBody $bottom>
              <ContactLink href="mailto:info@stravero.nl">info@stravero.nl</ContactLink>
            </ContactBody>
          </ContactItem>
          <ContactItem>
            <IconTile>
              <MdOutlineCall />
            </IconTile>
            <ContactBody>
              <ContactTitle>Bel ons</ContactTitle>
              <ContactLink href="tel:+31403098118">+31(40) 309 8118</ContactLink>
              <ContactLink href="tel:+31653756903">+31(6) 5375 6903</ContactLink>
            </ContactBody>
          </ContactItem>
          <ContactItem>
            <IconTile>
              <MdOutlineCalendarMonth />
            </IconTile>
            <ContactBody>
              <ContactTitle>Realitycheck</ContactTitle>
              <PlanButton type="button">Inplannen</PlanButton>
            </ContactBody>
          </ContactItem>
        </ContactList>

        <FormCard onSubmit={e => e.preventDefault()}>
          <FieldLabel htmlFor="message">Bericht</FieldLabel>
          <MessageBox id="message" />
          <SubmitButton type="submit">Verzend Bericht</SubmitButton>
        </FormCard>
      </Contact>

      <MapFrame>
        <StreetMap />
        <ZoomControl>
          <ZoomButton type="button" aria-label="Zoom in">
            <svg width="14" height="14" stroke="currentColor" strokeWidth="2">
              <path d="M7 0V14M0 7H14" />
            </svg>
          </ZoomButton>
          <ZoomButton type="button" aria-label="Zoom out">
            <svg width="14" height="14" stroke="currentColor" strokeWidth="2">
              <path d="M0 7H14" />
            </svg>
          </ZoomButton>
        </ZoomControl>
        <Marker>
          <MdOutlineLocationOn />
        </Marker>
        <Attribution href="https://leafletjs.com">
          <svg width="14" height="10">
            <rect width="14" height="5" fill="#8a8a8a" />
            <rect y="5" width="14" height="5" fill="#5a5a5a" />
          </svg>
          Leaflet
        </Attribution>
      </MapFrame>

      <Footer>
        <div>
          <Logo viewBox="0 0 182 40" role="img" aria-label="Stravero">
            <g fill="#ffffff">
              <path d="M22.500 0L33.500 22H29.200L22.500 8.500L18.600 16.500L24.500 25.500H37L45.500 39.500H25L28 35.500H37.800L34 29.500H25.500L19.500 39.500H1L12.500 19.500L14.500 25L8.500 35.500H17L21 28L13.500 17.500Z" />
              <text x="47" y="28" fontFamily="'Liberation Serif', serif" fontSize="26">
                STRAVERO
              </text>
              <text
                x="48"
                y="39"
                fontFamily="Inter, sans-serif"
                fontSize="6"
                fontWeight="600"
                letterSpacing="1"
              >
                STRATEGIE · STRUCTUUR · IMPACT
              </text>
            </g>
          </Logo>
          <Tagline>Wij zetten strategie om in structuur,</Tagline>
        </div>
        {FOOTER_COLUMNS.map(({ title, links }) => (
          <div key={title}>
            <FooterTitle>{title}</FooterTitle>
            <FooterLinks>
              {links.map(link => (
                <li key={link}>
                  <a href="#">{link}</a>
                </li>
              ))}
            </FooterLinks>
          </div>
        ))}
        <div>
          <FooterTitle>Nieuwsbrief</FooterTitle>
          <NewsletterText>
            Blijf op de hoogte van de nieuwste inzichten en strategieën.
          </NewsletterText>
        </div>
      </Footer>
    </>
  );
}
